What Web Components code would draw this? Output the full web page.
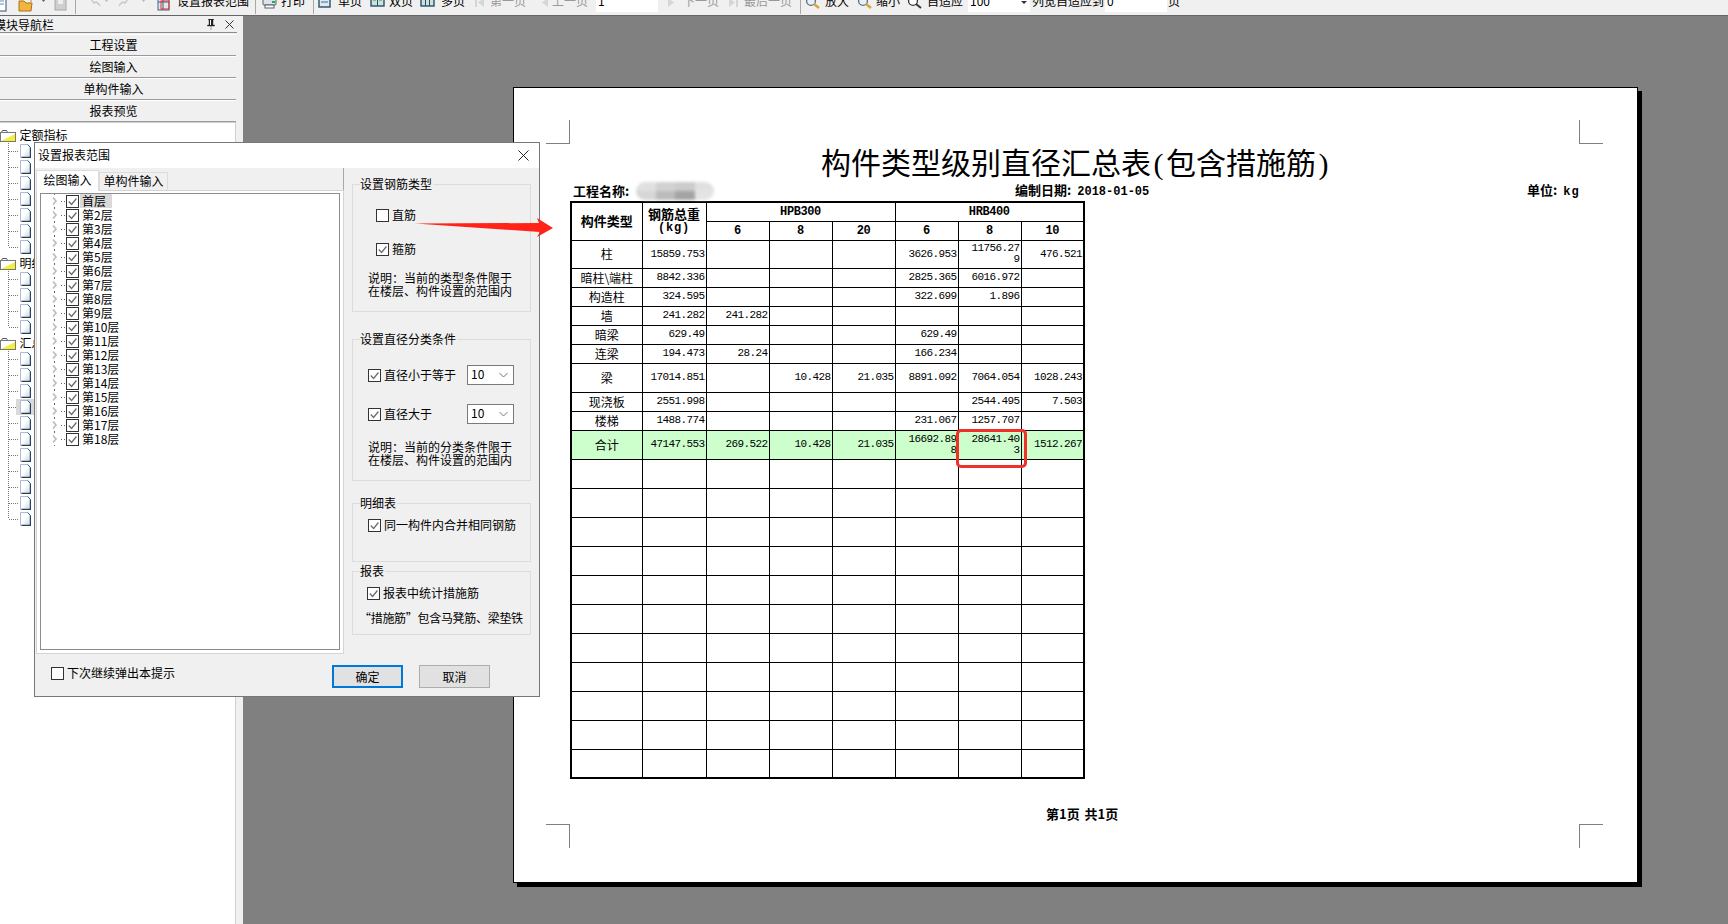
<!DOCTYPE html>
<html lang="zh"><head><meta charset="utf-8"><title>报表预览</title>
<style>
html,body{margin:0;padding:0;height:924px;overflow:hidden}
body{font:12px/14px "Noto Sans CJK SC","Liberation Sans",sans-serif;color:#000;background:#808080;display:flex;flex-direction:column;width:1728px}
.stage{display:flex;flex:1;min-height:0}
</style></head>
<body>
<app-toolbar></app-toolbar>
<div class="stage">
  <nav-panel></nav-panel>
  <report-viewer>
    <report-page>
      <report-table></report-table>
    </report-page>
  </report-viewer>
</div>
<settings-dialog></settings-dialog>
<red-arrow></red-arrow>
<script>
const ICONS={
 doc:'<rect x="2" y="0" width="10" height="13" fill="#fff" stroke="#24507a"/><path d="M4 3h6M4 6h6" stroke="#6a8ab0"/>',
 folder:'<path d="M1 3h5l2 2h6l-1 8H1z" fill="#f3b53c" stroke="#a8721a"/><path d="M9 0h4v4" stroke="#c58a20" fill="none"/>',
 save:'<rect x="1" y="0" width="11" height="12" fill="#cfcfcf" stroke="#a8a8a8"/><rect x="4" y="2" width="5" height="4" fill="#eee"/>',
 undo:'<path d="M1 1l3 4 2-1c2 1 3 2 4 4" fill="none" stroke="#c8c8c8" stroke-width="1.4"/>',
 redo:'<path d="M10 1L7 5 5 4C3 5 2 6 1 8" fill="none" stroke="#c8c8c8" stroke-width="1.4"/>',
 tiny:'<path d="M0 1h5L2.5 4z" fill="#666"/>',
 tinyg:'<path d="M0 1h5L2.5 4z" fill="#bbb"/>',
 report:'<rect x="1" y="-3" width="11" height="15" fill="#dfe6ef" stroke="#44617f"/><path d="M1 1h11M1 4h11M6 -3v15" stroke="#44617f"/><rect x="4" y="3" width="8" height="8" fill="none" stroke="#d33" />',
 print:'<rect x="1" y="1" width="13" height="6" rx="1" fill="#dde3e8" stroke="#56616b"/><rect x="3" y="7" width="9" height="3" fill="#fff" stroke="#56616b"/><rect x="10" y="3" width="3" height="2" fill="#1bb24a"/>',
 one:'<rect x="1" y="-2" width="11" height="11" fill="#dfe9f2" stroke="#24506a" stroke-width="1.4"/><path d="M3 1h7M3 4h7" stroke="#3d6d8c"/>',
 two:'<rect x="1" y="-2" width="13" height="10" fill="#cfe0d8" stroke="#24506a" stroke-width="1.4"/><path d="M7.5-2v10" stroke="#24506a"/><path d="M3 2h3M9 2h3" stroke="#2d8f6a"/>',
 many:'<rect x="1" y="-2" width="13" height="10" fill="#cfe0d8" stroke="#24506a" stroke-width="1.4"/><path d="M5.5-2v10M9.5-2v10" stroke="#24506a"/>',
 first:'<path d="M1 0v9" stroke="#ccc" stroke-width="1.5"/><path d="M9 0L3 4.5 9 9z" fill="#d6d6d6"/>',
 prev:'<path d="M8 0L2 4.5 8 9z" fill="#d6d6d6"/>',
 next:'<path d="M2 0l6 4.5L2 9z" fill="#d6d6d6"/>',
 last:'<path d="M1 0l6 4.5L1 9z" fill="#d6d6d6"/><path d="M9 0v9" stroke="#ccc" stroke-width="1.5"/>',
 zoomin:'<circle cx="6" cy="3" r="4.4" fill="#e8f0fa" stroke="#5d6d82" stroke-width="1.3"/><path d="M9 6l5 4" stroke="#d6a63c" stroke-width="2.4"/>',
 fit:'<circle cx="6" cy="3" r="4.4" fill="#fff" stroke="#33373b" stroke-width="1.3"/><path d="M9 6l5 4" stroke="#33373b" stroke-width="2"/>'
};
const ic=(k,w=15)=>`<svg width="${w}" height="14" viewBox="0 -4 ${w} 14" style="flex:none;overflow:visible">${ICONS[k]}</svg>`;

class AppToolbar extends HTMLElement{constructor(){super();
 const items=[
  ['i','doc',-6,15],['i','folder',18,15],['i','tiny',41,5],['i','save',54,13],['s',75],
  ['i','undo',90,11],['i','tinyg',104,5],['i','redo',118,11],['i','tinyg',141,5],
  ['i','report',157,14],['t','设置报表范围',177,72],['s',255],
  ['i','print',262,15],['t','打印',281,24],['s',313],
  ['i','one',318,14],['t','单页',338,24],['i','two',370,15],['t','双页',389,24],['i','many',420,15],['t','多页',441,24],
  ['i','first',475,10],['g','第一页',490,36],['i','prev',540,9],['g','上一页',552,36],
  ['f','1',596,62],['i','next',666,9],['g','下一页',683,36],['i','last',728,10],['g','最后一页',744,48],['s',800],
  ['i','zoomin',805,15],['t','放大',825,24],['i','zoomin',857,15],['t','缩小',876,24],['i','fit',907,15],['t','自适应',927,36],
  ['f','100',968,62,1],['t','列宽自适应到',1032,72],['f','0',1105,62],['t','页',1168,12]
 ];
 let cur=0,h='';
 for(const it of items){const k=it[0];const x=k==='s'?it[1]:it[2];const m=x-cur;const st=`margin-left:${m}px`;
  if(k==='s'){h+=`<span class="sep" style="${st}"></span>`;cur=x+1}
  else if(k==='i'){h+=`<span style="${st};display:inline-flex;width:${it[3]}px">${ic(it[1],it[3])}</span>`;cur=x+it[3]}
  else if(k==='f'){h+=`<span class="field" style="${st};width:${it[3]}px">${it[1]}${it[4]?'<i></i>':''}</span>`;cur=x+it[3]}
  else{h+=`<span class="${k==='g'?'gray':''}" style="${st};width:${it[3]}px;white-space:nowrap;overflow:hidden;flex:none">${it[1]}</span>`;cur=x+it[3]}
 }
 this.attachShadow({mode:'open'}).innerHTML=`<style>
 :host{display:block;height:15px;background:#f0f0f0;border-bottom:1px solid #666;overflow:hidden;flex:none}
 .row{display:flex;align-items:flex-start;height:14px;margin-top:-6px;line-height:14px}
 .sep{width:1px;height:22px;background:#a8a8a8;flex:none;margin-top:-2px}
 .gray{color:#9a9a9a}
 .field{height:18px;background:#fff;flex:none;box-sizing:border-box;padding-left:2px;position:relative}
 .field i{position:absolute;right:3px;top:7px;border:3px solid transparent;border-top-color:#333;border-bottom:0}
 </style><div class="row">${h}</div>`;
}}
customElements.define('app-toolbar',AppToolbar);

const DOC=`<svg width="11" height="14" viewBox="0 0 11 14"><defs><linearGradient id="d" x1="0" x2="1" y1="0" y2="1"><stop offset=".45" stop-color="#fff"/><stop offset="1" stop-color="#c5d3e6"/></linearGradient></defs><path d="M.5.5h7l3 3v10H.5z" fill="url(#d)" stroke="#a9bcdc"/><path d="M10.5 3.5v10H1.5" fill="none" stroke="#26405f" stroke-width="1.4"/><path d="M7.5.5l3 3" stroke="#33506f"/></svg>`;
const FOLDER=`<svg width="16" height="13" viewBox="0 0 16 13"><path d="M.5 3.5h1l1-2h4l1 2h8v9H.5z" fill="#fff" stroke="#555"/><path d="M1 12L15 5v7z" fill="#f5ee3a"/><path d="M.5 3.5h15v9H.5z" fill="none" stroke="#777"/></svg>`;

class TreeBranch extends HTMLElement{constructor(){super();
 const label=this.getAttribute('label');const n=+this.getAttribute('files');const sel=+(this.getAttribute('selected')||-1);
 let rows='';
 for(let i=0;i<n;i++){const last=i===n-1;
  rows+=`<div class="file ${i===sel?'sel':''}"><svg width="20" height="16"><path d="M8.5 0V${last?8:16}" stroke="#777" stroke-dasharray="1 1" fill="none"/><path d="M9 8.5h10" stroke="#777" stroke-dasharray="1 1"/></svg><span class="ic">${DOC}</span></div>`;
 }
 this.attachShadow({mode:'open'}).innerHTML=`<style>
 :host{display:block}
 .head{display:flex;align-items:center;height:16px;white-space:nowrap}
 .head span{margin-left:3.5px}
 .file{display:flex;height:16px;align-items:center}
 .ic{display:inline-flex;width:18px;height:16px;align-items:center}
 .sel .ic{background:#d9d9d9;width:18px;margin-left:-4px;padding-left:4px;box-sizing:border-box}
 </style><div class="head">${FOLDER}<span>${label}</span></div>${rows}`;
}}
customElements.define('tree-branch',TreeBranch);

class NavPanel extends HTMLElement{constructor(){super();
 this.attachShadow({mode:'open'}).innerHTML=`<style>
 :host{display:flex;flex-direction:column;width:243px;flex:none;background:#f0f0f0;box-sizing:border-box;padding:1px 7px 0 0;overflow:hidden}
 .title{height:15px;display:flex;align-items:center;border-bottom:1px solid #8c8c8c;margin:0 -1px 1px 0;line-height:15px}
 .title b{font-weight:400;margin-left:-6px;white-space:nowrap}
 .title .r{margin-left:auto;display:flex;gap:9px;align-items:center;padding-right:3px}
 .btn{height:22px;box-sizing:border-box;border-top:1px solid #fff;border-bottom:1px solid #9a9a9a;display:flex;align-items:center;justify-content:center;padding-right:9px;background:#f0f0f0}
 .tree{flex:1;margin-top:0;background:#fff;border:1px solid #d0d0d0;border-left:0;border-bottom:0;padding-top:4px;overflow:hidden}
 </style>
 <div class="title"><b>模块导航栏</b><span class="r">
   <svg width="10" height="11" viewBox="0 0 10 11"><path d="M2.5 0h5v1H7v5h1.500v1H1.500V6H3V1h-.5zM5 7v4" fill="#222" stroke="#222" stroke-width=".4"/><path d="M4 1h1v5H4z" fill="#fff"/></svg>
   <svg width="9" height="9" viewBox="0 0 9 9"><path d="M.5.500l8 8M8.500.500l-8 8" stroke="#333"/></svg></span></div>
 <div class="btn">工程设置</div><div class="btn">绘图输入</div><div class="btn">单构件输入</div><div class="btn">报表预览</div>
 <div class="tree">
  <tree-branch label="定额指标" files="7"></tree-branch>
  <tree-branch label="明细表" files="4"></tree-branch>
  <tree-branch label="汇总表" files="11" selected="3"></tree-branch>
 </div>`;
}}
customElements.define('nav-panel',NavPanel);

class ReportViewer extends HTMLElement{constructor(){super();
 this.attachShadow({mode:'open'}).innerHTML=`<style>
 :host{display:block;flex:1;background:#808080;padding:71px 0 0 270px;box-sizing:border-box;overflow:hidden}
 </style><slot></slot>`;
}}
customElements.define('report-viewer',ReportViewer);

class ReportPage extends HTMLElement{constructor(){super();
 this.attachShadow({mode:'open'}).innerHTML=`<style>
 :host{display:block;position:relative;width:1125px;height:796px;box-sizing:border-box;background:#fff;border:1px solid #000;box-shadow:4px 4px 0 #000}
 .mark{position:absolute;width:24px;height:24px;box-sizing:border-box;border:0 solid #808080}
 .tl{left:32px;top:32px;border-right-width:1px;border-bottom-width:1px}
 .tr{left:1065px;top:32px;border-left-width:1px;border-bottom-width:1px}
 .bl{left:32px;top:736px;border-right-width:1px;border-top-width:1px}
 .br{left:1065px;top:736px;border-left-width:1px;border-top-width:1px}
 h1{margin:0;padding:58px 0 0 307px;font-size:30px;line-height:30px;font-weight:400;white-space:nowrap;font-family:"Noto Sans CJK SC",sans-serif}
 h1 i{font-style:normal;font-family:"Liberation Serif",serif;margin:0 2.500px}
 .info{display:flex;align-items:center;height:16px;margin:4px 0 2px;padding-left:59px;font-size:13px;font-weight:700;white-space:nowrap;line-height:16px}
 .info>span{flex:none}
 .m{font-family:"Liberation Mono",monospace;font-size:12px;letter-spacing:0}
 .c{margin-right:3px}
 .d{margin-right:6px}
 .kg{letter-spacing:1px}
 .name{width:63px}
 .blob{width:78px;height:18px;flex:none;display:grid;grid-template-columns:repeat(4,1fr);grid-template-rows:1fr 1fr;filter:blur(1.4px);border-radius:9px;overflow:hidden}
 .blob b{display:block}
 .date{margin-left:301px;width:512px}
 .foot{padding:28px 0 0 532px;font-size:13px;line-height:14px;font-weight:700;white-space:nowrap;word-spacing:2px}
 .tb{padding-left:56px}
 .red{position:absolute;left:442px;top:341px;width:71px;height:39px;box-sizing:border-box;border:3px solid #f0302a;border-radius:5px}
 </style>
 <span class="mark tl"></span><span class="mark tr"></span><span class="mark bl"></span><span class="mark br"></span>
 <h1>构件类型级别直径汇总表<i>(</i>包含措施筋<i>)</i></h1>
 <div class="info"><span class="name">工程名称:</span><span class="blob"><b style="background:#e0e0e0"></b><b style="background:#d2d2d2"></b><b style="background:#cccccc"></b><b style="background:#e0e0e0"></b><b style="background:#d6d6d6"></b><b style="background:#bcbcbc"></b><b style="background:#a4a4a4"></b><b style="background:#e4e4e4"></b></span>
   <span class="date">编制日期:<span class="d"></span><span class="m">2018-01-05</span></span><span>单位:<span class="c"></span> <span class="m kg">kg</span></span></div>
 <div class="tb"><slot></slot></div>
 <div class="foot">第1页 共1页</div>
 <div class="red"></div>`;
}}
customElements.define('report-page',ReportPage);

class ReportTable extends HTMLElement{constructor(){super();
 const data=[
 ['柱',28,'15859.753','','','','3626.953','11756.27<br>9','476.521'],
 ['暗柱\\端柱',19,'8842.336','','','','2825.365','6016.972',''],
 ['构造柱',19,'324.595','','','','322.699','1.896',''],
 ['墙',19,'241.282','241.282','','','','',''],
 ['暗梁',19,'629.49','','','','629.49','',''],
 ['连梁',19,'194.473','28.24','','','166.234','',''],
 ['梁',29,'17014.851','','10.428','21.035','8891.092','7064.054','1028.243'],
 ['现浇板',19,'2551.998','','','','','2544.495','7.503'],
 ['楼梯',19,'1488.774','','','','231.067','1257.707',''],
 ['合计',29,'47147.553','269.522','10.428','21.035','16692.89<br>8','28641.40<br>3','1512.267']];
 let rows='';
 data.forEach((r,i)=>{rows+=`<tr class="${r[0]==='合计'?'sum':''}" style="height:${r[1]}px"><td class="n">${r[0]}</td>`+r.slice(2).map(v=>`<td>${v}</td>`).join('')+'</tr>'});
 for(let i=0;i<11;i++)rows+=`<tr style="height:29px">${'<td></td>'.repeat(8)}</tr>`;
 this.attachShadow({mode:'open'}).innerHTML=`<style>
 :host{display:block}
 table{border-collapse:collapse;table-layout:fixed;width:513px;border:2px solid #000}
 td,th{border:1px solid #000;padding:0 1px 0 0;text-align:right;font:11px/11px "Liberation Mono",monospace;letter-spacing:-.6px;overflow:hidden;white-space:nowrap;vertical-align:middle}
 td.n{text-align:center;font:12px/14px "Noto Sans CJK SC",sans-serif;letter-spacing:0;padding:0}
 th{text-align:center;font:700 12px/12px "Liberation Mono",monospace;letter-spacing:-.4px;padding:0}
 th.c{font:700 13px/12px "Noto Sans CJK SC",sans-serif;letter-spacing:0}
 th.c span{font:700 12px/11px "Liberation Mono",monospace;letter-spacing:.8px}
 .sum td{background:#ccffcc}
 </style><table>
 <colgroup><col style="width:71px"><col style="width:64px">${'<col style="width:63px">'.repeat(6)}</colgroup>
 <tr style="height:19px"><th class="c" rowspan="2">构件类型</th><th class="c" rowspan="2">钢筋总重<br><span>(kg)</span></th><th colspan="3">HPB300</th><th colspan="3">HRB400</th></tr>
 <tr style="height:19px"><th>6</th><th>8</th><th>20</th><th>6</th><th>8</th><th>10</th></tr>
 ${rows}</table>`;
}}
customElements.define('report-table',ReportTable);

class XCheck extends HTMLElement{constructor(){super();
 const c=this.hasAttribute('checked');
 this.attachShadow({mode:'open'}).innerHTML=`<style>
 :host{display:inline-flex;align-items:center;gap:var(--gap,3px);height:14px;white-space:nowrap;flex:none}
 svg{flex:none;display:block}
 </style><svg width="13" height="13" viewBox="0 0 13 13"><rect x=".5" y=".5" width="12" height="12" fill="#fff" stroke="#333"/>${c?'<path d="M2.800 6.500l2.800 3 4.800-6" fill="none" stroke="#6e6e6e" stroke-width="1.300"/>':''}</svg><slot></slot>`;
}}
customElements.define('x-check',XCheck);

class XSelect extends HTMLElement{constructor(){super();
 this.attachShadow({mode:'open'}).innerHTML=`<style>
 :host{display:flex;align-items:center;justify-content:space-between;width:47px;height:20px;box-sizing:border-box;border:1px solid #7a7a7a;background:#fff;padding:0 5px 0 3px;flex:none}
 </style><span style="margin-top:-2px"><slot></slot></span><svg width="9" height="6" viewBox="0 0 9 6"><path d="M.5 1l4 4 4-4" fill="none" stroke="#777"/></svg>`;
}}
customElements.define('x-select',XSelect);

class GroupBox extends HTMLElement{constructor(){super();
 this.attachShadow({mode:'open'}).innerHTML=`<style>
 :host{display:block;position:relative;box-sizing:border-box;border:1px solid #dcdcdc;width:179px}
 .lg{position:absolute;left:7px;top:-8px;background:#f0f0f0;padding-right:1px;line-height:14px;white-space:nowrap}
 </style><span class="lg">${this.getAttribute('label')}</span><slot></slot>`;
}}
customElements.define('group-box',GroupBox);

class SettingsDialog extends HTMLElement{constructor(){super();
 const names=['首层'];for(let i=2;i<=18;i++)names.push('第'+i+'层');
 const rows=names.map((n,i)=>`<div class="fl"><svg width="16" height="14" viewBox="0 0 16 14"><path d="M3 3.500l3 3.500-3 3.500" fill="none" stroke="#bdbdbd" stroke-width="1.700"/><path d="M4.500 0v1M4.500 13v1M11 7.500h1M14 7.500h1" stroke="#666"/></svg><x-check checked style="--gap:1px"><span class="${i===0?'cur':'lab'}">${n}</span></x-check></div>`).join('');
 this.attachShadow({mode:'open'}).innerHTML=`<style>
 :host{position:absolute;left:34px;top:142px;width:506px;height:555px;box-sizing:border-box;border:1px solid #777;background:#f0f0f0;display:flex;flex-direction:column;z-index:5}
 .tb{height:25px;background:#fff;display:flex;align-items:center;padding:0 10px 0 3px;flex:none;justify-content:space-between}
 .tb span{margin-top:-2px}
 .mid{display:flex;height:486px;flex:none}
 .left{width:309px;box-sizing:border-box;border-right:1px solid #a8a8a8;padding:1px 0 0 1px;display:flex;flex-direction:column}
 .tabs{display:flex;height:21px;align-items:flex-end}
 .tab{box-sizing:border-box;display:flex;align-items:center;justify-content:center;border:1px solid #dcdcdc;border-bottom:0;padding-bottom:2px}
 .tab.on{width:63px;height:21px;background:#fff;margin-bottom:-1px;position:relative;z-index:1}
 .tab.off{width:69px;height:18px}
 .pane{flex:1;background:#fff;border:1px solid #d4d4d4;margin-right:-1px;padding:2px 3px 3px 3px;display:flex;min-height:0}
 .list{flex:1;box-sizing:border-box;border:1px solid #8c8c8c;padding:0 0 0 9px}
 .fl{display:flex;height:14px;align-items:center}
 .lab,.cur{padding:0 2px;line-height:14px}
 .cur{background:#d9d9d9;padding:0 6px 0 2px}
 .right{flex:1;padding:16px 0 0 8px;display:flex;flex-direction:column}
 .g1{height:128px;padding:23px 0 0 23px}
 .g2{height:142px;margin-top:27px;padding:25px 16px 0 15px}
 .g3{height:59px;margin-top:22px;padding:14px 0 0 15px}
 .g4{height:64px;margin-top:9px;padding:14px 0 0 14px}
 .g1 x-check{display:flex}
 .g1 x-check+x-check{margin-top:20px}
 .note{line-height:13px;white-space:nowrap}
 .g1 .note{margin:15px 0 0 -8px}
 .g2 .note{margin:16px 0 0 0}
 .r{display:flex;align-items:center;justify-content:space-between;height:20px}
 .r+.r{margin-top:19px}
 .g4 .note{margin:9px 0 0 -8px;letter-spacing:-.3px}
 .foot{flex:1;display:flex;align-items:flex-start;padding:11px 49px 0 16px}
 .foot x-check{margin-top:1px}
 .foot .sp{flex:1}
 .btn{width:71px;height:23px;box-sizing:border-box;background:#e1e1e1;border:1px solid #adadad;display:flex;align-items:center;justify-content:center}
 .btn.def{border:2px solid #0078d7;margin-right:16px}
 </style>
 <div class="tb"><span>设置报表范围</span><svg width="11" height="11" viewBox="0 0 11 11"><path d="M.5.500l10 10M10.500.500l-10 10" stroke="#222"/></svg></div>
 <div class="mid">
  <div class="left">
   <div class="tabs"><div class="tab on">绘图输入</div><div class="tab off">单构件输入</div></div>
   <div class="pane"><div class="list">${rows}</div></div>
  </div>
  <div class="right">
   <group-box class="g1" label="设置钢筋类型">
     <x-check>直筋</x-check><x-check checked>箍筋</x-check>
     <div class="note">说明：当前的类型条件限于<br>在楼层、构件设置的范围内</div>
   </group-box>
   <group-box class="g2" label="设置直径分类条件">
     <div class="r"><x-check checked>直径小于等于</x-check><x-select>10</x-select></div>
     <div class="r"><x-check checked>直径大于</x-check><x-select>10</x-select></div>
     <div class="note">说明：当前的分类条件限于<br>在楼层、构件设置的范围内</div>
   </group-box>
   <group-box class="g3" label="明细表"><x-check checked>同一构件内合并相同钢筋</x-check></group-box>
   <group-box class="g4" label="报表"><x-check checked>报表中统计措施筋</x-check><div class="note">“措施筋”包含马凳筋、梁垫铁</div></group-box>
  </div>
 </div>
 <div class="foot"><x-check>下次继续弹出本提示</x-check><span class="sp"></span><div class="btn def">确定</div><div class="btn">取消</div></div>`;
}}
customElements.define('settings-dialog',SettingsDialog);

class RedArrow extends HTMLElement{constructor(){super();
 this.attachShadow({mode:'open'}).innerHTML=`<style>:host{position:absolute;left:414px;top:216px;width:140px;height:22px;z-index:6}svg{display:block}</style>
 <svg width="140" height="22" viewBox="414 216 140 22"><path d="M415 223.500L539 223 537 218 553 228 537 237 540 232z" fill="#ff2318"/></svg>`;
}}
customElements.define('red-arrow',RedArrow);
</script>
</body></html>
